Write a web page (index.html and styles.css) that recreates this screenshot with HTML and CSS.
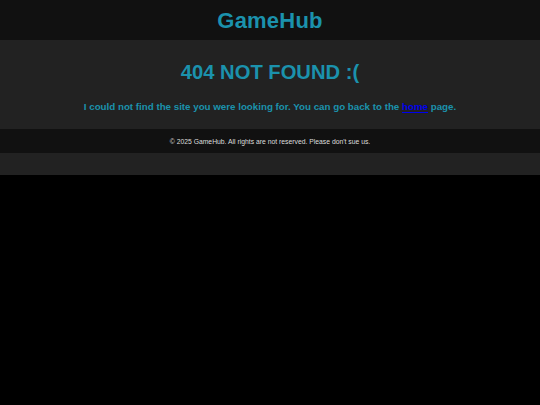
FILE: index.html
```html
<!DOCTYPE html>
<html lang="en">
<head>
<meta charset="utf-8">
<title>404 - GameHub</title>
<link rel="stylesheet" href="styles.css">
</head>
<body>
<header class="site-header">
  <h1 class="logo">GameHub</h1>
</header>
<main class="content">
  <h2 class="title">404 NOT FOUND :(</h2>
  <p class="message">I could not find the site you were looking for. You can go back to the <a href="#" class="home-link">home</a> page.</p>
</main>
<footer class="site-footer">
  <p class="copy">© 2025 GameHub. All rights are not reserved. Please don't sue us.</p>
</footer>
</body>
</html>
```

FILE: styles.css
```css
html {
  background: #000;
}
body {
  margin: 0;
  padding-bottom: 22px;
  background: #222;
  font-family: "Liberation Sans", Arial, sans-serif;
}
.site-header {
  background: #111;
  padding: 8px 0 6px;
  text-align: center;
}
.logo {
  margin: 0;
  font-size: 22px;
  line-height: 26px;
  letter-spacing: 0.2px;
  color: #1b92ad;
}
.content {
  background: #222;
  padding: 20px 0 15px;
  text-align: center;
}
.title {
  margin: 0 0 16px;
  font-size: 20.2px;
  line-height: 24px;
  color: #1b92ad;
}
.message {
  margin: 0;
  font-size: 9.75px;
  line-height: 14px;
  font-weight: bold;
  color: #1b92ad;
}
.home-link {
  color: #0000ee;
  text-decoration: underline;
  text-decoration-thickness: 1px;
  text-underline-offset: 2px;
}
.site-footer {
  background: #111;
  padding: 6px 0 4px;
  text-align: center;
}
.copy {
  margin: 0;
  font-size: 6.8px;
  line-height: 14px;
  color: #ddd;
}
```
